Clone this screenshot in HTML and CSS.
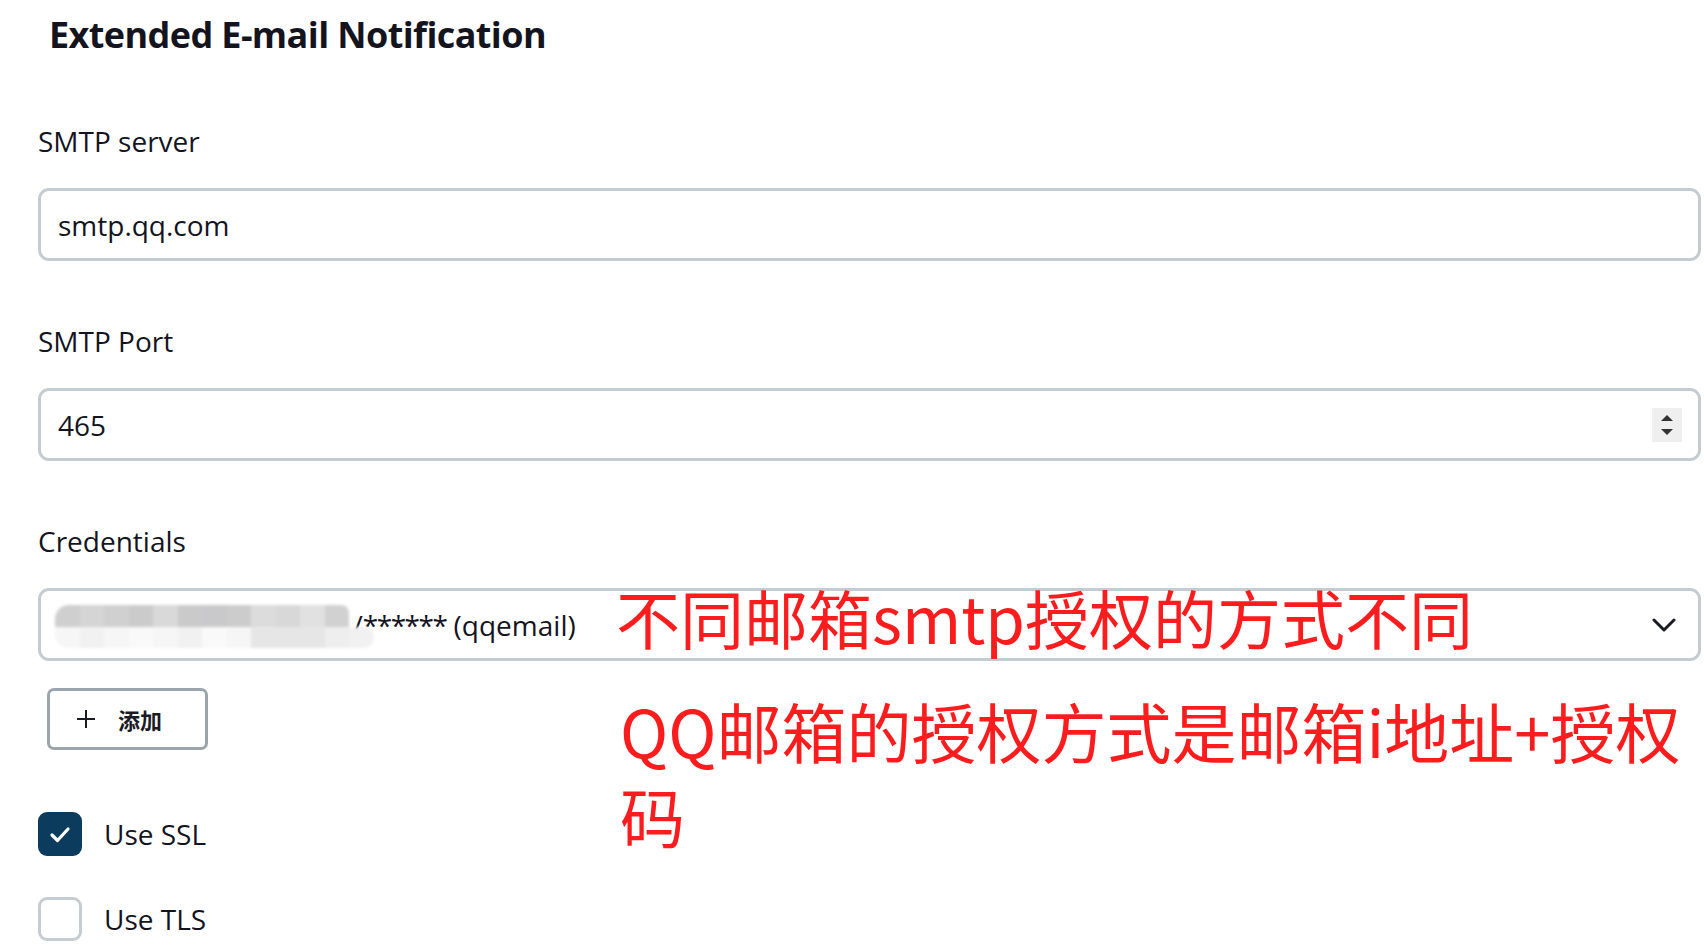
FILE: index.html
```html
<!DOCTYPE html>
<html lang="zh-CN">
<head>
    <meta charset="UTF-8">
    <meta name="viewport" content="width=device-width, initial-scale=1.0">
    <title>Extended E-mail Notification</title>
    <link rel="stylesheet" href="styles.css">
</head>
<body>
    <div class="page">
        <h2 class="section-title">Extended E-mail Notification</h2>

        <div class="field">
            <label class="field-label" for="smtpServer">SMTP server</label>
            <div class="text-box">
                <input class="text-input" id="smtpServer" type="text" value="smtp.qq.com">
            </div>
        </div>

        <div class="field">
            <label class="field-label" for="smtpPort">SMTP Port</label>
            <div class="text-box">
                <input class="text-input" id="smtpPort" type="text" value="465">
                <span class="spinner">
                    <svg width="30" height="32" viewBox="0 0 30 32">
                        <path d="M9 12 L15 6 L21 12 Z" fill="#333"/>
                        <path d="M9 20 L21 20 L15 26 Z" fill="#333"/>
                    </svg>
                </span>
            </div>
        </div>

        <div class="field field-last">
            <label class="field-label">Credentials</label>
            <div class="text-box select-box">
                <span class="mosaic">
                    <span class="m m1"></span><span class="m m2"></span><span class="m m3"></span><span class="m m4"></span><span class="m m5"></span><span class="m m6"></span><span class="m m7"></span><span class="m m8"></span><span class="m m9"></span><span class="m m10"></span><span class="m m11"></span><span class="m m12"></span><span class="m"></span>
                    <span class="m b1"></span><span class="m b2"></span><span class="m b1"></span><span class="m b3"></span><span class="m b1"></span><span class="m b2"></span><span class="m b3"></span><span class="m b1"></span><span class="m b4"></span><span class="m b4"></span><span class="m b4"></span><span class="m b5"></span><span class="m b2 end"></span>
                </span>
                <span class="cred-text">/<span class="stars">******</span> (qqemail)</span>
                <svg class="chevron" width="24" height="14" viewBox="0 0 24 14">
                    <path d="M2 2 L12 12 L22 2" fill="none" stroke="#1b1b26" stroke-width="3" stroke-linecap="round" stroke-linejoin="round"/>
                </svg>
            </div>
            <button class="add-btn" type="button">
                <svg width="18" height="18" viewBox="0 0 18 18">
                    <path d="M9 0 V18 M0 9 H18" stroke="#1b1b26" stroke-width="2"/>
                </svg>
                <span>添加</span>
            </button>
        </div>

        <div class="check-row">
            <span class="checkbox checked">
                <svg width="44" height="44" viewBox="0 0 44 44">
                    <path d="M14 23 L19.5 28.5 L30 17" fill="none" stroke="#fff" stroke-width="3.2" stroke-linecap="round" stroke-linejoin="round"/>
                </svg>
            </span>
            <span class="check-label">Use SSL</span>
        </div>
        <div class="check-row">
            <span class="checkbox"></span>
            <span class="check-label">Use TLS</span>
        </div>
    </div>

    <div class="note note-top">不同邮箱smtp授权的方式不同</div>
    <div class="note note-bottom">QQ邮箱的授权方式是邮箱i地址+授权<br>码</div>
</body>
</html>
```

FILE: styles.css
```css
body {
    margin: 0;
    background: #fff;
    color: #14141f;
    font-family: "Open Sans", "Noto Sans", "Noto Sans CJK SC", sans-serif;
    position: relative;
    height: 947px;
    overflow: hidden;
}

.page {
    padding: 0 3px 0 38px;
}

.section-title {
    margin: 9px 0 0 11px;
    font-size: 36px;
    line-height: 52px;
    font-weight: 700;
    letter-spacing: -0.6px;
}

.field {
    margin-top: 60px;
}

.field-label {
    display: block;
    font-size: 28px;
    line-height: 40px;
    margin-bottom: 27px;
}

.text-box {
    display: flex;
    align-items: center;
    height: 73px;
    box-sizing: border-box;
    border: 3px solid #c4ccd1;
    border-radius: 11px;
    padding: 0 17px;
    background: #fff;
}

.text-input {
    flex: 1;
    border: none;
    outline: none;
    padding: 0;
    font-family: inherit;
    font-size: 28px;
    color: #14141f;
    background: transparent;
}

.spinner {
    display: flex;
    align-items: center;
    justify-content: center;
    width: 30px;
    height: 34px;
    background: #efefef;
    margin-right: -1px;
}

.select-box {
    padding-left: 14px;
    padding-right: 22px;
}

.mosaic {
    position: relative;
    z-index: 1;
    display: grid;
    grid-template-columns: repeat(13, 24.5px);
    grid-template-rows: 22px 21px;
    border-radius: 14px 0 0 14px;
    overflow: hidden;
    filter: blur(1.5px);
    margin-top: 4px;
}

.m1 { background: #cfcfcf; border-top-left-radius: 10px; }
.m2 { background: #d5d5d5; }
.m3 { background: #d0d0d0; }
.m4 { background: #cbcbcb; }
.m5 { background: #d9d9d9; }
.m6 { background: #cacaca; }
.m7 { background: #c9c9cb; }
.m8 { background: #cccccc; }
.m9 { background: #dcdcdc; }
.m10 { background: #d8d8d8; }
.m11 { background: #e1e1e1; }
.m12 { background: #d1d1d1; border-top-right-radius: 8px; }
.b1 { background: #f6f6f6; }
.b2 { background: #f1f1f1; }
.b3 { background: #f9f9f9; }
.b4 { background: #e6e6e6; }
.b5 { background: #eeeeee; }
.end { border-radius: 0 10px 10px 0; }

.cred-text {
    flex: 1;
    font-size: 28px;
    margin-left: -21px;
}

.stars {
    letter-spacing: -1.5px;
}

.chevron {
    flex: none;
}

.add-btn {
    display: flex;
    align-items: center;
    gap: 23px;
    margin: 27px 0 0 9px;
    width: 161px;
    height: 62px;
    box-sizing: border-box;
    padding: 0 0 0 27px;
    border: 3px solid #9aa5ad;
    border-radius: 7px;
    background: #fff;
    font-family: "Noto Sans CJK SC", sans-serif;
    font-size: 22px;
    font-weight: 700;
    color: #1b1b26;
}

.check-row {
    display: flex;
    align-items: center;
    gap: 22px;
    margin-top: 41px;
}

.field-last + .check-row {
    margin-top: 62px;
}

.checkbox {
    width: 44px;
    height: 44px;
    box-sizing: border-box;
    border: 3px solid #c6cdd2;
    border-radius: 9px;
    background: #fff;
}

.checkbox.checked {
    border: none;
    background: #0b3c5d;
}

.checkbox svg {
    display: block;
}

.check-label {
    font-size: 28px;
    line-height: 40px;
}

.note {
    position: absolute;
    color: #fb1d1d;
    font-family: "Noto Sans CJK SC", sans-serif;
    white-space: nowrap;
}

.note-top {
    left: 616px;
    top: 575px;
    font-size: 64px;
    line-height: 82px;
}

.note-bottom {
    left: 620px;
    top: 688px;
    font-size: 65px;
    line-height: 85px;
}
```
